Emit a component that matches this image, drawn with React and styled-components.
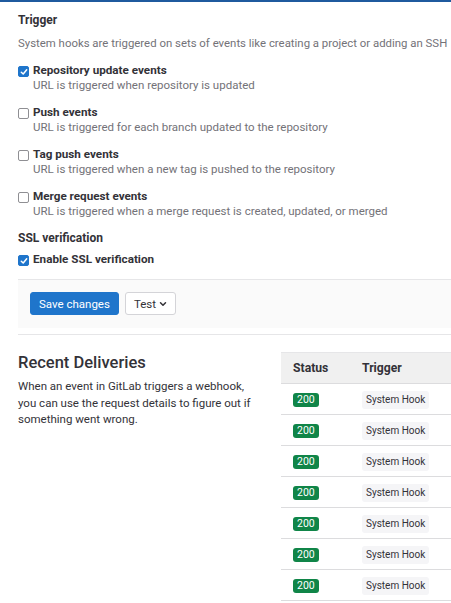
import React from "react";
import styled, { createGlobalStyle } from "styled-components";

const GlobalStyle = createGlobalStyle`
  html, body {
    margin: 0;
    padding: 0;
    background: #fff;
    overflow: hidden;
  }
  body {
    font-family: Roboto, "Liberation Sans", Arial, sans-serif;
    color: #333238;
    -webkit-font-smoothing: antialiased;
  }
`;

const Page = styled.div`
  border-top: 2px solid #1f5a9e;
  padding: 10px 0 0 18px;
  width: 640px;
`;

const SectionTitle = styled.div`
  font-size: 12px;
  font-weight: 700;
  line-height: 16px;
  color: #333238;
  margin-top: ${(p) => p.$top || 0}px;
`;

const Description = styled.p`
  margin: 7px 0 0;
  font-size: 11.4px;
  line-height: 16px;
  color: #737278;
  white-space: nowrap;
`;

const Option = styled.label`
  display: grid;
  grid-template-columns: 15px auto;
  margin-top: ${(p) => p.$top}px;
`;

const Box = styled.span`
  width: 9px;
  height: 9px;
  margin-top: 4px;
  border-radius: 2px;
  border: 1px solid ${(p) => (p.$checked ? "#1f75cb" : "#8f8f93")};
  background: ${(p) => (p.$checked ? "#1f75cb" : "#fff")};
  display: flex;
  align-items: center;
  justify-content: center;
  box-sizing: content-box;
`;

const OptionLabel = styled.span`
  font-size: 11.7px;
  font-weight: 700;
  line-height: 16px;
  color: #333238;
`;

const Help = styled.span`
  grid-column: 2;
  font-size: 11.5px;
  line-height: 15px;
  color: #737278;
`;

const Footer = styled.div`
  margin-top: 12px;
  background: #fafafa;
  border-top: 1px solid #e6e6e8;
  padding: 12px 12px 13px;
  display: flex;
  gap: 6px;
`;

const Button = styled.button`
  height: 23px;
  padding: 0 8px;
  font-family: inherit;
  font-size: 11.5px;
  border-radius: 3px;
  border: 1px solid ${(p) => (p.$primary ? "#1f75cb" : "#d4d4d8")};
  background: ${(p) => (p.$primary ? "#1f75cb" : "#fff")};
  color: ${(p) => (p.$primary ? "#fff" : "#333238")};
  display: flex;
  align-items: center;
  gap: 3px;
`;

const Rule = styled.hr`
  margin: 6px 0 0;
  border: 0;
  border-top: 1px solid #e6e6e8;
`;

const Deliveries = styled.div`
  display: flex;
  margin-top: 17px;
`;

const Intro = styled.div`
  width: 263px;
  flex: none;
`;

const Heading = styled.h3`
  margin: 1px 0 0;
  font-size: 16.5px;
  font-weight: 500;
  line-height: 20px;
  color: #333238;
`;

const IntroText = styled.p`
  margin: 5px 0 0;
  width: 240px;
  font-size: 11.5px;
  line-height: 16.5px;
  color: #333238;
`;

const Table = styled.div`
  flex: 1;
`;

const Row = styled.div`
  display: grid;
  grid-template-columns: 69px 1fr;
  align-items: center;
  height: 30px;
  padding-left: 12px;
  background: ${(p) => (p.$head ? "#f0f0f0" : "#fff")};
  border-top: ${(p) => (p.$head ? "1px solid #e6e6e8" : "0")};
  border-bottom: 1px solid #dcdcde;
  font-size: 12.2px;
  font-weight: ${(p) => (p.$head ? 700 : 400)};
`;

const Badge = styled.span`
  justify-self: start;
  margin-top: 1px;
  background: #108548;
  color: #fff;
  font-size: 10.5px;
  line-height: 14px;
  padding: 0 4px;
  border-radius: 3px;
`;

const Chip = styled.span`
  justify-self: start;
  margin-top: 1px;
  background: #f5f5f7;
  color: #333238;
  font-size: 10px;
  line-height: 18px;
  padding: 0 4px;
  border-radius: 3px;
`;

const Check = () => (
  <svg width="8" height="8" viewBox="0 0 8 8">
    <path d="M1.3 4.2 L3.2 6 L6.7 1.8" fill="none" stroke="#fff" strokeWidth="1.5" strokeLinecap="round" strokeLinejoin="round" />
  </svg>
);

const events = [
  ["Repository update events", "URL is triggered when repository is updated", true],
  ["Push events", "URL is triggered for each branch updated to the repository", false],
  ["Tag push events", "URL is triggered when a new tag is pushed to the repository", false],
  ["Merge request events", "URL is triggered when a merge request is created, updated, or merged", false],
];

export default function App() {
  return (
    <>
      <GlobalStyle />
      <Page>
        <SectionTitle>Trigger</SectionTitle>
        <Description>
          System hooks are triggered on sets of events like creating a project or adding an SSH
        </Description>
        {events.map(([label, help, checked]) => (
          <Option key={label} $top={11}>
            <Box $checked={checked}>{checked && <Check />}</Box>
            <OptionLabel>{label}</OptionLabel>
            <Help>{help}</Help>
          </Option>
        ))}
        <SectionTitle $top={11}>SSL verification</SectionTitle>
        <Option $top={5}>
          <Box $checked>
            <Check />
          </Box>
          <OptionLabel>Enable SSL verification</OptionLabel>
        </Option>
        <Footer>
          <Button $primary>Save changes</Button>
          <Button>
            Test
            <svg width="8" height="8" viewBox="0 0 8 8">
              <path d="M1.5 2.8 L4 5.3 L6.5 2.8" fill="none" stroke="#333238" strokeWidth="1.5" strokeLinecap="round" strokeLinejoin="round" />
            </svg>
          </Button>
        </Footer>
        <Rule />
        <Deliveries>
          <Intro>
            <Heading>Recent Deliveries</Heading>
            <IntroText>
              When an event in GitLab triggers a webhook, you can use the request details to figure out if something went wrong.
            </IntroText>
          </Intro>
          <Table>
            <Row $head>
              <span>Status</span>
              <span>Trigger</span>
            </Row>
            {Array.from({ length: 7 }).map((_, i) => (
              <Row key={i}>
                <Badge>200</Badge>
                <Chip>System Hook</Chip>
              </Row>
            ))}
          </Table>
        </Deliveries>
      </Page>
    </>
  );
}
